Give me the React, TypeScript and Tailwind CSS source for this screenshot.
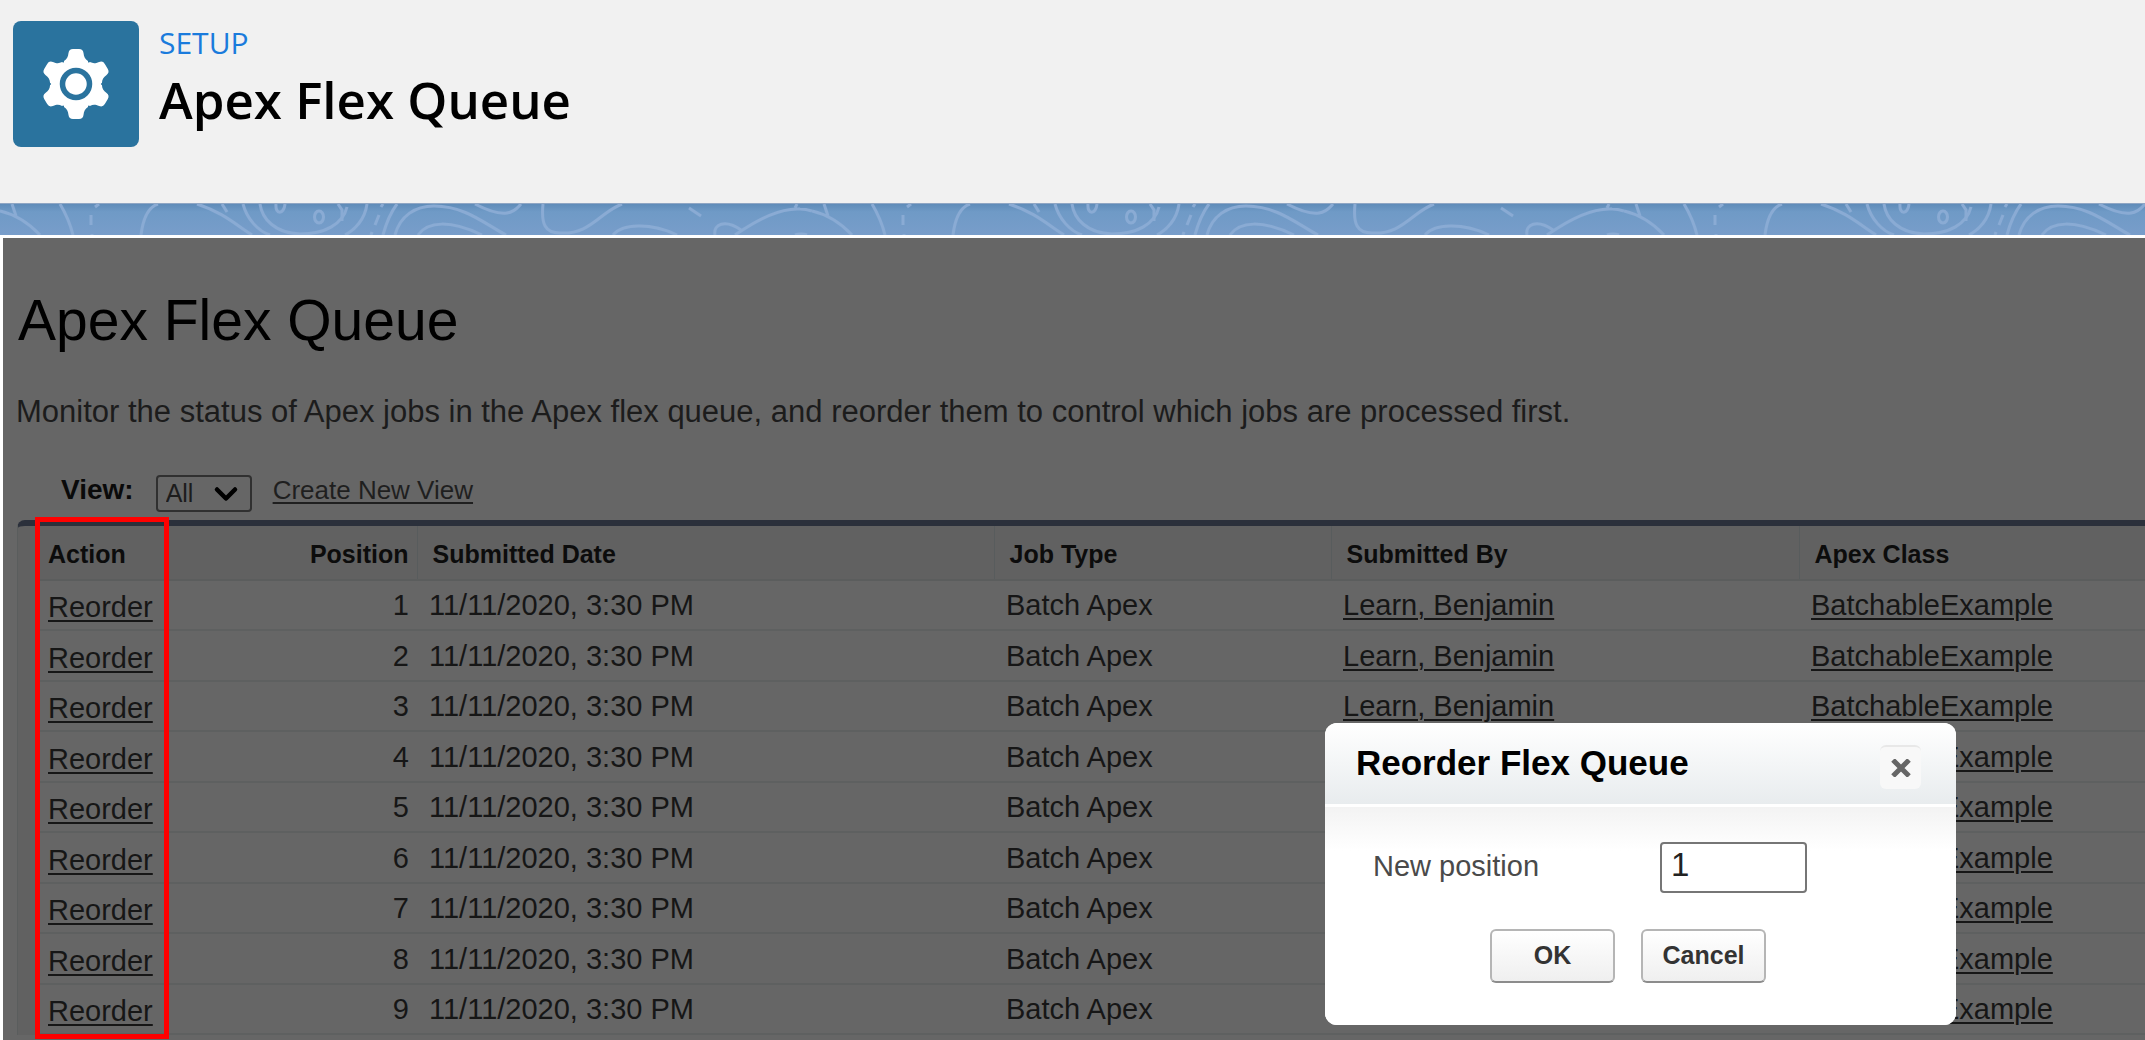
import { ChevronDown } from "lucide-react";

const rows = [1, 2, 3, 4, 5, 6, 7, 8, 9];

const contourPaths = [
  "M0 7Q22 12 40 31",
  "M12 0L16 12",
  "M60 0Q69 15 73 31",
  "M91 11v10M95 3l4-3M92 30v1",
  "M141 31C143 15 148 3 158 0",
  "M197 0C222 8 235 20 252 31",
  "M222 0l5 8",
  "M243 0C247 15 258 27 270 31",
  "M367 0C365 15 355 26 345 31",
  "M260 0C262 15 275 29 300 30C325 30 343 20 347 3",
  "M276 0C275 11 284 11 285 0",
  "M338 0l4 6v11",
  "M379 11l-4 10M381 3l2-3M372 28l-1 3",
  "M397 0Q388 12 383 31",
  "M395 31C400 12 415 2 434 2C465 2 485 20 506 31",
  "M418 31C428 17 450 16 482 31",
  "M475 0C490 8 500 10 507 9C515 8 518 3 521 0",
  "M543 0C541 20 545 29 560 29C590 31 600 8 622 0",
  "M613 31C622 20 650 18 677 31",
  "M689 4L701 12",
  "M715 31C713 20 725 15 741 26",
  "M735 31C765 10 785 4 800 5Q806 5 812 7",
  "M797 0l-2 4",
  "M795 31q6-2 12 0",
];

function GearIcon() {
  const tooth =
    "M-12-23C-9-25-8-27-7.500-31Q-7-35-3-35H3Q7-35 7.500-31C8-27 9-25 12-23V0H-12Z";
  return (
    <svg viewBox="-63 -63 126 126" className="size-full" aria-hidden="true">
      <g fill="#fff">
        {[0, 60, 120, 180, 240, 300].map((angle) => (
          <path key={angle} d={tooth} transform={`rotate(${angle})`} />
        ))}
        <circle r="25" />
      </g>
      <circle r="13.500" fill="none" stroke="#2a739e" strokeWidth="5.500" />
    </svg>
  );
}

function ContourBand() {
  return (
    <div className="h-8 border-t border-[#8fa6c4] bg-linear-to-b from-[#5f8cb9] via-[#6f9ac6] via-25% to-[#789dca]">
      <svg className="block h-full w-full" aria-hidden="true">
        <defs>
          <pattern id="contours" width="812" height="31" patternUnits="userSpaceOnUse">
            <g fill="none" stroke="#8aabd4" strokeWidth="3">
              {contourPaths.map((d) => (
                <path key={d} d={d} />
              ))}
              <ellipse cx="319" cy="13" rx="4.500" ry="6" />
            </g>
          </pattern>
        </defs>
        <rect width="100%" height="31" fill="url(#contours)" />
      </svg>
    </div>
  );
}

const th = "border-l border-[#585c5d] pt-0.5 pl-[15px] text-left font-bold";

function JobsTable() {
  return (
    <div className="relative ml-[14px] rounded-tl-lg border-t-[6px] border-l border-t-[#2b303b] border-l-[#5a5d5d] bg-[#616161] pl-[22px]">
      <table className="w-full table-fixed border-collapse text-[29px] leading-8 text-[#161616]">
        <colgroup>
          <col className="w-[123px]" />
          <col className="w-[254px]" />
          <col className="w-[577px]" />
          <col className="w-[337px]" />
          <col className="w-[468px]" />
          <col />
        </colgroup>
        <thead>
          <tr className="h-[54px] border-b-2 border-[#5b5d5d] text-[25px] text-[#0c0c0c]">
            <th className="pt-0.5 pl-2 text-left font-bold">Action</th>
            <th className="pt-0.5 pr-2 text-right font-bold">Position</th>
            <th className={th}>Submitted Date</th>
            <th className={th}>Job Type</th>
            <th className={th}>Submitted By</th>
            <th className={th}>Apex Class</th>
          </tr>
        </thead>
        <tbody className="bg-[#666]">
          {rows.map((n) => (
            <tr key={n} className="border-b-2 border-[#5e6060] odd:h-[50px] even:h-[51px]">
              <td className="pt-1 pl-2">
                <a href="#reorder" className="underline decoration-2 underline-offset-3">Reorder</a>
              </td>
              <td className="pr-2 text-right">{n}</td>
              <td className="pl-3">11/11/2020, 3:30 PM</td>
              <td className="pl-3">Batch Apex</td>
              <td className="pl-3">
                <a href="#user" className="underline decoration-2 underline-offset-3">Learn, Benjamin</a>
              </td>
              <td className="pl-3">
                <a href="#class" className="underline decoration-2 underline-offset-3">BatchableExample</a>
              </td>
            </tr>
          ))}
        </tbody>
      </table>
      <div className="pointer-events-none absolute -top-[9px] -bottom-1 left-[17px] w-[134px] border-[5px] border-[#ff0000]" />
    </div>
  );
}

const dialogButton =
  "h-[54px] w-[125px] rounded-md border-2 border-[#b5b5b5] border-b-[#8c8c8c] bg-linear-to-b from-white to-[#efefef] text-[25px] font-bold text-[#333]";

function ReorderDialog() {
  return (
    <div
      role="dialog"
      aria-labelledby="dialog-title"
      className="absolute top-[723px] right-[189px] w-[631px] overflow-hidden rounded-xl bg-white"
    >
      <div className="flex h-[81px] items-start justify-between bg-linear-to-b from-white to-[#e8ecee] pt-5 pr-[35px] pl-[31px]">
        <h2 id="dialog-title" className="text-[35px] leading-10 font-bold text-black">
          Reorder Flex Queue
        </h2>
        <button
          type="button"
          aria-label="Close"
          className="mt-0.5 grid h-[44px] w-[41px] place-items-center rounded-md border-t-2 border-[#e8e8e8] bg-[#f8f8f8]"
        >
          <svg width="20" height="18" viewBox="0 0 20 18" aria-hidden="true">
            <path d="M2 1L18 17M18 1L2 17" stroke="#666" strokeWidth="5" />
          </svg>
        </button>
      </div>
      <form className="mt-[3px] h-[218px] bg-linear-to-b from-[#f3f3f3] to-white to-20% pt-[35px]">
        <div className="flex items-center pl-12">
          <label htmlFor="position" className="w-[287px] pb-1 text-[29px] leading-8 text-[#4a4a4a]">
            New position
          </label>
          <input
            id="position"
            defaultValue="1"
            className="h-[51px] w-[147px] rounded-sm border-2 border-[#767676] bg-white pb-1.5 pl-[9px] text-[33px] text-[#222]"
          />
        </div>
        <div className="mt-9 flex justify-center gap-[26px] pr-[25px]">
          <button type="button" className={dialogButton}>OK</button>
          <button type="button" className={dialogButton}>Cancel</button>
        </div>
      </form>
    </div>
  );
}

export default function App() {
  return (
    <div className="relative flex min-h-screen flex-col overflow-hidden bg-white font-['Liberation_Sans',Arial,sans-serif]">
      <header className="flex h-[203px] items-start gap-5 bg-[#f1f1f1] pt-[21px] pl-[13px]">
        <div className="size-[126px] rounded-lg bg-[#2a739e]">
          <GearIcon />
        </div>
        <div className="font-['Open_Sans','Noto_Sans',sans-serif]">
          <p className="pt-0.5 text-[30px] leading-10 text-[#1a7bdc]">SETUP</p>
          <h1 className="pt-0.5 text-[51px] leading-[68px] font-semibold text-black">Apex Flex Queue</h1>
        </div>
      </header>
      <ContourBand />
      <main className="mt-[3px] ml-[3px] flex-1 bg-[#666]">
        <h1 className="pt-[49px] pl-[15px] text-[57px] leading-[66px] text-black">Apex Flex Queue</h1>
        <p className="pt-[41px] pl-[13px] text-[31px] leading-9 text-[#1c1c1c]">
          Monitor the status of Apex jobs in the Apex flex queue, and reorder them to control which jobs are
          processed first.
        </p>
        <div className="flex items-center pt-11 pb-2 pl-[58px]">
          <label htmlFor="view" className="pb-1.5 text-[28px] leading-8 font-bold text-[#0a0a0a]">
            View:
          </label>
          <div className="relative ml-[22px]">
            <select
              id="view"
              className="block h-[37px] w-24 appearance-none rounded-sm border-2 border-[#303030] pl-2 text-[25px] leading-8 text-[#1c1c1c]"
            >
              <option>All</option>
            </select>
            <ChevronDown
              className="pointer-events-none absolute top-px right-2 size-9 text-black"
              strokeWidth={3}
              aria-hidden="true"
            />
          </div>
          <a
            href="#new-view"
            className="ml-[21px] pb-1.5 text-[26px] leading-8 text-[#1f1f1f] underline decoration-2 underline-offset-3"
          >
            Create New View
          </a>
        </div>
        <JobsTable />
      </main>
      <ReorderDialog />
    </div>
  );
}
